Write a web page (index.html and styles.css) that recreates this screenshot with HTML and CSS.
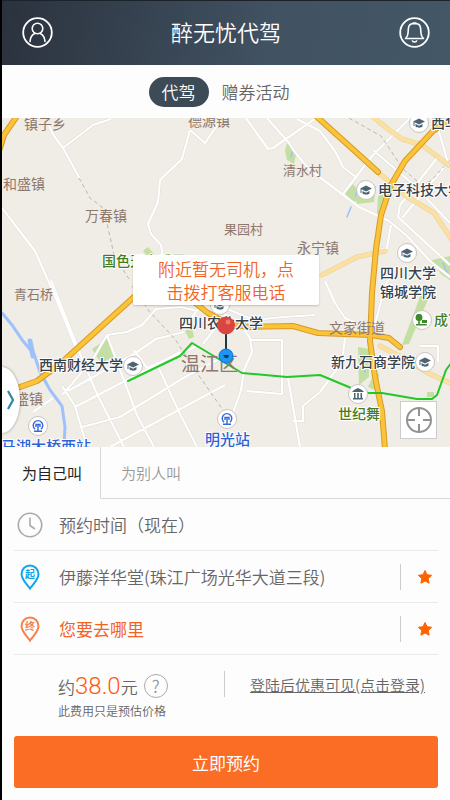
FILE: index.html
```
<!DOCTYPE html>
<html lang="zh-CN">
<head>
    <meta charset="UTF-8">
    <meta name="viewport" content="width=device-width, initial-scale=1.0">
    <title>醉无忧代驾</title>
    <link rel="stylesheet" href="styles.css">
</head>
<body>
    <header class="header">
        <button class="icon-btn" aria-label="个人中心">
            <svg width="31" height="31" viewBox="0 0 31 31" fill="none" stroke="#fff" stroke-width="1.6">
                <circle cx="15.500" cy="15.500" r="14.300" stroke-width="1.800"/>
                <circle cx="15.500" cy="11.500" r="5.300"/>
                <path d="M8 24.500c.2-4.200 2.300-7 5-8.100M23 24.500c-.2-4.200-2.300-7-5-8.100" stroke-linecap="round"/>
            </svg>
        </button>
        <h1>醉无忧代驾</h1>
        <button class="icon-btn" aria-label="消息">
            <svg width="31" height="31" viewBox="0 0 31 31" fill="none" stroke="#fff" stroke-width="1.6">
                <circle cx="15.500" cy="15.500" r="14.300" stroke-width="1.800"/>
                <path d="M6.500 21.500h18c-1.800-1.500-2.400-3-2.500-5.200l-.4-4.900c-.3-3-2.300-4.700-4.400-4.700h-3.400c-2.100 0-4.100 1.700-4.400 4.700L9 16.300c-.1 2.200-.7 3.700-2.500 5.200z" stroke-linejoin="round"/>
                <path d="M13.500 6h4M13.200 23.300c.5 2.300 4.100 2.300 4.600 0"/>
            </svg>
        </button>
    </header>

    <nav class="service-nav">
        <a href="#" class="active">代驾</a>
        <a href="#">赠券活动</a>
    </nav>

    <main class="map">
        <svg class="map-canvas" viewBox="2 118 448 329" preserveAspectRatio="xMidYMid slice">
            <defs>
                <g id="school">
                    <circle r="9.500" fill="#fff" stroke="#c9c5c0"/>
                    <path d="M-6-1.500L0-4.500 6-1.500 0 1.500zM-3.500 1v2.500c1.800 1.600 5.200 1.600 7 0V1L0 2.800z" fill="#4d6475"/>
                    <path d="M-5-1v4" stroke="#4d6475"/>
                </g>
                <g id="metro">
                    <circle r="9.500" fill="#fff" stroke="#c9c5c0"/>
                    <path d="M-3 3.200a4.800 4.800 0 1 1 6 0M-2 1v-2.500h4V1M0-1.500V5M-4 5.200h8" fill="none" stroke="#3568dc" stroke-width="1.400"/>
                </g>
                <path id="roads" fill="none" stroke-linejoin="round" d="M49 126l5 10 9 12 17 31M63 148l30-23 18-6M190 130l-8 29-22 21-2 22-10 22 3 10 10 11 2 12M190 130l15 13 15-22M246 118l22 31 5-1 43-30M267 118l22 25 5 8 15 18 50 38 30 14 18 15 24 26 38 30M297 119l23 12 15 20 8 16 14 11M343 194l29-38 38-38M2 208l33 43 20 45 23 57M51 280l15 38 19 48 13 30 26 51M391 225l-4 23-17 4M435 118l11 38 4 14M437 158l-37 47-2 12 52 48M373 150l41 35 36 38M450 160l-48 58M396 266l-11 20-13 50M107 335l20-3 15-7 14-16 25-2 16 4M107 335l30 80 17 32M62 395l8-9 23-27 14-24M62 386l13 20 12 41M68 391l66-37 22-15 28-7M75 407l77-40 28-15M82 427l38-10 65-40 38-20M110 447l115-62M134 350l13 18 50-22M156 362l23 50 18 35M184 328l24-32M203 344l23-30M33 412l20-14M325 281l10 22 10 15 15 7M225 308l29 12 29-3 32-2M240 324l10 14 2 14-8 18-3 20-11 32M249 340h33v54l-35-3M288 378l12 69M345 338l-3 24-22 30-17 14v15h-10M420 346h18v16"/>
            </defs>
            <rect x="2" y="118" width="448" height="329" fill="#f0ece6"/>

            <!-- 绿地 -->
            <g fill="#c3dfa4">
                <path d="M287 143l4 5 5 7-2 9-7-4-2-9zM345 193l8-9 3 4 2 12-6 3zM361 180l15 6-2 16-18 2zM92 349l15-10 7 18-13 6zM432 260l18-4v24l-9-6zM421 294l8 3-20 47-7 1zM358 347l11 2v28l-10 8zM143 251l5-4 6 7-4 5zM185 331l7-3 2 9-5 2zM378 197l4-8 3 12-6 14-2-2zM375 372l4 2-2 17-9-4zM427 392h7v5h-7z"/>
            </g>

            <!-- 河流 -->
            <g fill="none" stroke="#9fc1fb" stroke-linecap="round">
                <path d="M2 313l10 12 11 16 11 13 6 18 10 18 12 16 3 21-1 20" stroke-width="3"/>
                <path d="M30 341l3 15" stroke-width="5"/>
                <path d="M351 207l-4 10M293 149l-2 8M356 196l2-10M361 355l4 17M443 263l7 16" stroke-width="1.500"/>
            </g>

            <!-- 支路 -->
            <use href="#roads" stroke="#dfdad4" stroke-width="3"/>
            <use href="#roads" stroke="#fff" stroke-width="2.200"/>

            <g fill="none" stroke="#bbb6b0" stroke-dasharray="4 3">
                <path d="M79 178l11 20 12 9 5 16 7 32 15 24M132 286l17 25 26 28 20 31 30 43M349 118l32 18 22 33 14 12M450 160l-18 20-14 8"/>
            </g>

            <!-- 主干道 -->
            <g fill="none" stroke-linejoin="round" stroke-linecap="round">
                <g stroke="#e8d29a" stroke-width="5">
                    <path d="M372 116l16 13 14 10 20 6 28 21M380 174l26 22 28 17 18 27M322 275l35-18 28-6M380 346l25 13 23 14 24 11"/>
                </g>
                <g stroke="#fbe0a2" stroke-width="4">
                    <path d="M372 116l16 13 14 10 20 6 28 21M380 174l26 22 28 17 18 27M322 275l35-18 28-6M380 346l25 13 23 14 24 11"/>
                </g>
                <g stroke="#d79a2c" stroke-width="6">
                    <path d="M17 116L4 135l-4 13M316 116l30 27 32 29M452 117l-19 14-28 30-14 24-10 30-5 34-4 44-2 48 5 36 7 34 3 38M20 387l17-6 23-17 75-68M181 292l27 21 20 11 20 3 45-1 25 7 53 2 18 3 11 9"/>
                </g>
                <g stroke="#fbc336" stroke-width="4">
                    <path d="M17 116L4 135l-4 13M316 116l30 27 32 29M452 117l-19 14-28 30-14 24-10 30-5 34-4 44-2 48 5 36 7 34 3 38M20 387l17-6 23-17 75-68M181 292l27 21 20 11 20 3 45-1 25 7 53 2 18 3 11 9"/>
                </g>
                <path d="M128 381l52-25 12-13 50 30 45 4 33-2 36 15 12 3 14 0 35 6h15l5-4 9-25 6-8" stroke="#22c829" stroke-width="2"/>
            </g>

            <!-- 地名 -->
            <g class="place">
                <text x="24" y="129">镇子乡</text>
                <text x="188" y="126">德源镇</text>
                <text x="3" y="189">和盛镇</text>
                <text x="85" y="221">万春镇</text>
                <text x="297" y="253">永宁镇</text>
                <text x="329" y="333">文家街道</text>
                <text x="1" y="404">和盛镇</text>
                <text class="small" x="283" y="175">清水村</text>
                <text class="small" x="224" y="234">果园村</text>
                <text class="small" x="14" y="299">青石桥</text>
                <text class="district" x="181" y="371">温江区</text>
            </g>
            <g class="poi">
                <text x="431" y="128">西华大学</text>
                <text x="378" y="195">电子科技大学</text>
                <text x="380" y="278">四川大学</text>
                <text x="380" y="297">锦城学院</text>
                <text x="179" y="328">四川农业大学</text>
                <text x="39" y="370">西南财经大学</text>
                <text x="331" y="367">新九石商学院</text>
            </g>
            <g class="poi park">
                <text x="102" y="266">国色天乡乐园</text>
                <text x="434" y="325">成飞公园</text>
                <text x="338" y="419">世纪舞</text>
            </g>
            <g class="poi station">
                <text x="205" y="445">明光站</text>
                <text x="1" y="452">马湖大桥西站</text>
            </g>

            <use href="#school" x="419" y="123"/>
            <use href="#school" x="366" y="190"/>
            <use href="#school" x="407" y="253"/>
            <use href="#school" x="133" y="366"/>
            <use href="#school" x="425" y="362"/>
            <use href="#school" x="220" y="305"/>
            <use href="#metro" x="38" y="426"/>
            <use href="#metro" x="227" y="419"/>
            <g transform="translate(358 394)">
                <circle r="9.500" fill="#fff" stroke="#c9c5c0"/>
                <path d="M-6-2l2-2 4-2 4 2 2 2zM-4-1h1.500v5H-4zM-.8-1H.8v5H-.8zM2.500-1H4v5H2.500zM-5 4H5v1.500H-5z" fill="#4d6475"/>
            </g>
            <g transform="translate(422 320)" fill="#3f8a2c">
                <circle r="9.500" fill="#fff" stroke="#c9c5c0"/>
                <path d="M-3-6a3 3.500 0 0 1 .8 7V4h7V5.500H-6V4h2.200V1A3 3.500 0 0 1-3-6zM0 0h5v3H0z"/>
            </g>
        </svg>

        <div class="locator">
            <button class="callout">附近暂无司机，点<br>击拨打客服电话</button>
            <svg width="20" height="50" viewBox="0 0 20 50">
                <path d="M10 18v18" stroke="#243746" stroke-width="2"/>
                <circle cx="10" cy="9.500" r="9" fill="#d9453f"/>
                <circle cx="12" cy="6" r="2.500" fill="#ee7a70"/>
                <circle cx="10" cy="40" r="7" fill="#1b96f5" stroke="#0b73cc"/>
                <path d="M7 39l6 0-1 3-3 0z" fill="#12395c"/>
            </svg>
        </div>

        <button class="drawer" aria-label="展开">
            <svg width="8" height="20" viewBox="0 0 8 20" fill="none" stroke="#2b87a5" stroke-width="2.200">
                <path d="M1 1l5 9-5 9"/>
            </svg>
        </button>

        <button class="recenter" aria-label="定位">
            <svg width="26" height="28" viewBox="0 0 26 28" fill="none" stroke="#929292" stroke-width="2">
                <circle cx="13" cy="14" r="12"/>
                <path d="M13 2v8M13 18v8M1 14h8M17 14h8"/>
            </svg>
        </button>
    </main>

    <section class="order">
        <div class="order-tabs">
            <button class="active">为自己叫</button>
            <button>为别人叫</button>
        </div>

        <ul class="fields">
            <li>
                <svg width="32" height="32" viewBox="0 0 32 32" fill="none" stroke="#aaa" stroke-width="1.600">
                    <circle cx="16" cy="16" r="11.700"/>
                    <path d="M16 8.500v8l5 3.500"/>
                </svg>
                <button class="field">预约时间（现在）</button>
            </li>
            <li>
                <svg class="pin-start" width="32" height="32" viewBox="0 0 32 32">
                    <path d="M16 27.500C13.500 23.500 7.500 19 7.500 13a8.500 8.500 0 0 1 17 0c0 6-6 10.500-8.500 14.500z"/>
                    <text x="16" y="17">起</text>
                </svg>
                <button class="field">伊藤洋华堂(珠江广场光华大道三段)</button>
                <button class="star" aria-label="常用地址">
                    <svg width="16" height="16" viewBox="0 0 16 16"><path d="M8 1.500l2 4.200 4.600.6-3.300 3.200.8 4.700L8 12l-4.100 2.200.8-4.700L1.400 6.300 6 5.700z"/></svg>
                </button>
            </li>
            <li>
                <svg class="pin-end" width="32" height="32" viewBox="0 0 32 32">
                    <path d="M16 27.500C13.500 23.500 7.500 19 7.500 13a8.500 8.500 0 0 1 17 0c0 6-6 10.500-8.500 14.500z"/>
                    <text x="16" y="17">终</text>
                </svg>
                <button class="field destination">您要去哪里</button>
                <button class="star" aria-label="常用地址">
                    <svg width="16" height="16" viewBox="0 0 16 16"><path d="M8 1.500l2 4.200 4.600.6-3.300 3.200.8 4.700L8 12l-4.100 2.200.8-4.700L1.400 6.300 6 5.700z"/></svg>
                </button>
            </li>
        </ul>

        <div class="estimate">
            <div class="price">
                <p class="amount">约<strong>38.0</strong>元
                    <button class="help" aria-label="费用说明">?</button>
                </p>
                <p class="note">此费用只是预估价格</p>
            </div>
            <div class="login">
                <a href="#">登陆后优惠可见(点击登录)</a>
            </div>
        </div>

        <button class="submit">立即预约</button>
    </section>
</body>
</html>
```

FILE: styles.css
```
* {
    box-sizing: border-box;
    margin: 0;
    padding: 0;
}
body {
    display: flex;
    flex-direction: column;
    min-height: 100vh;
    border-left: 2px solid #000;
    background: #fdfdfd;
    color: #666;
    font-family: "Noto Sans CJK SC", sans-serif;
    font-size: 17px;
    font-weight: 350;
}
button {
    border: none;
    background: none;
    color: inherit;
    font: inherit;
    cursor: pointer;
}
svg {
    display: block;
}
.header {
    display: flex;
    align-items: center;
    justify-content: space-between;
    height: 65px;
    padding: 0 20px 2px;
    border-top: 1px solid #1c2229;
    background: linear-gradient(100deg, #2b323e, #415262 60%, #435767);
}
.header h1 {
    color: #fff;
    font-size: 22px;
    font-weight: 350;
    line-height: 28px;
    padding-bottom: 2px;
}
.service-nav {
    display: flex;
    align-items: center;
    justify-content: center;
    gap: 13px;
    height: 53px;
    padding-right: 14px;
}
.service-nav a {
    color: #666;
    line-height: 30px;
    text-decoration: none;
}
.service-nav .active {
    padding: 0 13px;
    border-radius: 15px;
    background: #3d4b57;
    color: #fff;
}

/* 地图 */
.map {
    position: relative;
    flex: 1 0 329px;
    overflow: hidden;
    background: #f0ece6;
}
.map-canvas {
    position: absolute;
    width: 100%;
    height: 100%;
}
.place {
    fill: #8e786d;
    font-size: 14px;
    font-weight: 400;
}
.place .small {
    font-size: 13px;
}
.place .district {
    font-size: 19px;
}
.poi {
    fill: #34424d;
    font-size: 14px;
    font-weight: 500;
    stroke: #fff;
    stroke-width: 2px;
    paint-order: stroke;
}
.park {
    fill: #447e1c;
}
.station {
    fill: #2c62d6;
    font-size: 15px;
}
.locator {
    position: absolute;
    top: 137px;
    left: 50%;
    display: flex;
    flex-direction: column;
    align-items: center;
    gap: 11px;
    transform: translateX(-50%);
}
.callout {
    width: 186px;
    padding: 2px 0;
    border-radius: 2px;
    background: #fff;
    box-shadow: 0 1px 2px rgba(0,0,0,0.2);
    color: #f26322;
    line-height: 23px;
}
.drawer {
    position: absolute;
    bottom: 14px;
    left: 0;
    width: 18px;
    height: 66px;
    padding-left: 5px;
    border-radius: 0 18px 18px 0 / 0 33px 33px 0;
    background: #fff;
    box-shadow: 0 0 3px rgba(0,0,0,0.4);
}
.recenter {
    position: absolute;
    right: 13px;
    bottom: 8px;
    display: grid;
    place-items: center;
    width: 37px;
    height: 38px;
    border: 1px solid #ccc;
    background: #fff;
}

/* 下单 */
.order-tabs {
    display: flex;
    height: 52px;
}
.order-tabs button {
    flex: 1;
    padding-left: 20px;
    border-bottom: 1px solid #d8d8d8;
    color: #999;
    font-size: 15px;
    text-align: left;
}
.order-tabs .active {
    flex: 0 0 99px;
    border-right: 1px solid #d8d8d8;
    border-bottom-color: transparent;
    color: #222;
    font-weight: 400;
}
.fields {
    margin: 0 12px;
    list-style: none;
}
.fields li {
    display: flex;
    align-items: center;
    height: 52px;
    border-bottom: 1px solid #ebebeb;
}
.field {
    flex: 1;
    padding-left: 13px;
    text-align: left;
}
.destination {
    color: #f26322;
    font-weight: 400;
}
.pin-start,
.pin-end {
    fill: none;
    stroke: #0fa5e9;
    stroke-width: 2px;
}
.pin-end {
    stroke: #f58048;
}
.pin-start text,
.pin-end text {
    fill: #0fa5e9;
    stroke: none;
    font-size: 10px;
    font-weight: 700;
    text-anchor: middle;
}
.pin-end text {
    fill: #f58048;
}
.star {
    padding: 5px 5px 5px 16px;
    border-left: 1px solid #ccc;
}
.star path {
    fill: #ff6300;
    stroke: #ff6300;
    stroke-linejoin: round;
}
.estimate {
    display: flex;
    justify-content: space-between;
    padding: 16px 25px 15px 56px;
}
.amount {
    display: flex;
    align-items: center;
    height: 30px;
}
.amount strong {
    color: #ff5a0a;
    font-family: Roboto, sans-serif;
    font-size: 24px;
    font-weight: 300;
}
.help {
    width: 24px;
    height: 24px;
    margin-left: 6px;
    border: 1px solid #aaa;
    border-radius: 50%;
    color: #999;
    font-size: 17px;
    line-height: 20px;
}
.note {
    font-size: 12px;
    line-height: 20px;
}
.login {
    height: 26px;
    padding-left: 25px;
    border-left: 1px solid #ccc;
}
.login a {
    color: #666;
    font-size: 15px;
    line-height: 26px;
}
.submit {
    display: block;
    width: calc(100% - 24px);
    height: 52px;
    margin: 0 12px 12px;
    border-radius: 3px;
    background: #fb6d24;
    color: #fff;
    font-weight: 400;
}
```
